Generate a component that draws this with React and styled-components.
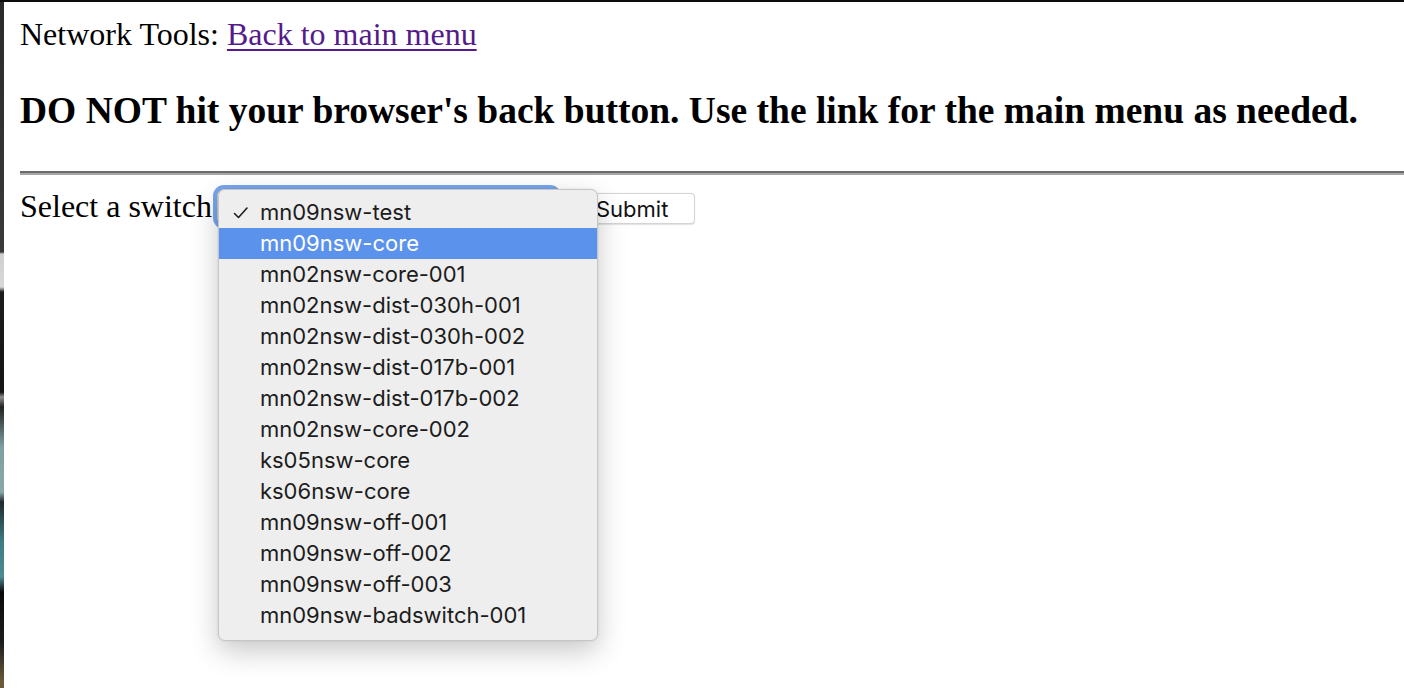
import styled, { createGlobalStyle } from 'styled-components';

const GlobalStyle = createGlobalStyle`
    html, body {
        margin: 0;
        padding: 0;
        background: #ffffff;
    }
    body {
        font-family: "Liberation Serif", "Times New Roman", serif;
        color: #000;
    }
`;

const switches = [
    'mn09nsw-test',
    'mn09nsw-core',
    'mn02nsw-core-001',
    'mn02nsw-dist-030h-001',
    'mn02nsw-dist-030h-002',
    'mn02nsw-dist-017b-001',
    'mn02nsw-dist-017b-002',
    'mn02nsw-core-002',
    'ks05nsw-core',
    'ks06nsw-core',
    'mn09nsw-off-001',
    'mn09nsw-off-002',
    'mn09nsw-off-003',
    'mn09nsw-badswitch-001',
];

export const Window = styled.div`
    width: 1404px;
    height: 688px;
    box-sizing: border-box;
    border-top: 2px solid #0c0c0c;
    display: flex;
    overflow: hidden;
`;

// sliver of desktop showing on the left of the browser window
export const DesktopEdge = styled.div`
    width: 4px;
    flex-shrink: 0;
    background: linear-gradient(
        to bottom,
        #2a2a2a 0px,
        #3a3a3a 250px,
        #cfcfcf 252px,
        #d8d8d8 285px,
        #1c1c1c 290px,
        #141414 390px,
        #8e8e8e 395px,
        #222 405px,
        #7fa0a0 445px,
        #8aa8a8 490px,
        #1f2a2c 500px,
        #3f7c84 540px,
        #4c8a90 575px,
        #0a0a0a 590px,
        #1c1c1c 640px,
        #6b5a3a 680px
    );
`;

export const Page = styled.div`
    flex: 1;
    padding: 14px 0 0 16px;
    position: relative;
`;

export const TopLine = styled.div`
    font-size: 32px;
    line-height: 37px;
`;

export const MenuLink = styled.a`
    color: #551a8b;
    text-decoration: underline;
    text-decoration-thickness: 2px;
    text-underline-offset: 4px;
`;

export const Warning = styled.h3`
    font-size: 37.5px;
    font-weight: bold;
    line-height: 43px;
    margin: 36px 0 0 0;
`;

export const Rule = styled.hr`
    margin: 39px 0 0 0;
    height: 0;
    border: none;
    border-top: 2px solid #6b6b6b;
    border-bottom: 2px solid #a6a6a6;
`;

export const FormRow = styled.div`
    display: flex;
    align-items: center;
    margin-top: 13px;
    font-size: 32px;
    line-height: 37px;
`;

export const SelectBox = styled.div`
    position: relative;
    width: 338px;
    height: 34px;
    margin-left: 5px;
    border-radius: 7px;
    background: #fff;
    border: 1px solid #c9c9c9;
    box-shadow: 0 0 0 4px #76a5ef;
`;

export const SubmitButton = styled.button`
    margin-left: 18px;
    width: 120px;
    height: 31px;
    margin-top: 4px;
    background: #fff;
    border: 1px solid #d4d4d4;
    border-radius: 4px;
    font-family: Inter, "Liberation Sans", sans-serif;
    font-size: 22px;
    color: #111;
    text-align: left;
    padding: 0 0 0 20px;
    box-shadow: 0 0.5px 1px rgba(0, 0, 0, 0.12);
`;

export const Popup = styled.ul`
    position: absolute;
    left: 0;
    top: -1px;
    width: 380px;
    margin: 0;
    padding: 7px 0 9px 0;
    list-style: none;
    box-sizing: border-box;
    background: #eeeeee;
    border: 1px solid #c6c6c6;
    border-radius: 7px;
    box-shadow: 0 10px 28px rgba(0, 0, 0, 0.22), 0 0 3px rgba(0, 0, 0, 0.08);
    z-index: 5;
`;

export const Option = styled.li`
    position: relative;
    height: 31px;
    line-height: 31px;
    padding-left: 41px;
    font-family: Inter, "Liberation Sans", sans-serif;
    font-size: 22px;
    color: ${props => (props.$active ? '#ffffff' : '#1c1c1c')};
    background: ${props => (props.$active ? '#5b93ec' : 'transparent')};
    white-space: nowrap;
`;

export const Check = styled.svg`
    position: absolute;
    left: 14px;
    top: 9px;
`;

const App = () => {
    return (
        <Window>
            <GlobalStyle />
            <DesktopEdge />
            <Page>
                <TopLine>
                    Network Tools: <MenuLink href="#">Back to main menu</MenuLink>
                </TopLine>
                <Warning>
                    DO NOT hit your browser's back button. Use the link for the main menu as needed.
                </Warning>
                <Rule />
                <FormRow>
                    Select a switch
                    <SelectBox>
                        <Popup>
                            {switches.map((name, i) => (
                                <Option key={name} $active={i === 1}>
                                    {i === 0 && (
                                        <Check width="16" height="14" viewBox="0 0 16 14">
                                            <path d="M1.5 7.5 L5.5 11.5 L14 2" fill="none" stroke="#1c1c1c" strokeWidth="1.6" strokeLinecap="round" strokeLinejoin="round" />
                                        </Check>
                                    )}
                                    {name}
                                </Option>
                            ))}
                        </Popup>
                    </SelectBox>
                    <SubmitButton>Submit</SubmitButton>
                </FormRow>
            </Page>
        </Window>
    );
};

export default App;
